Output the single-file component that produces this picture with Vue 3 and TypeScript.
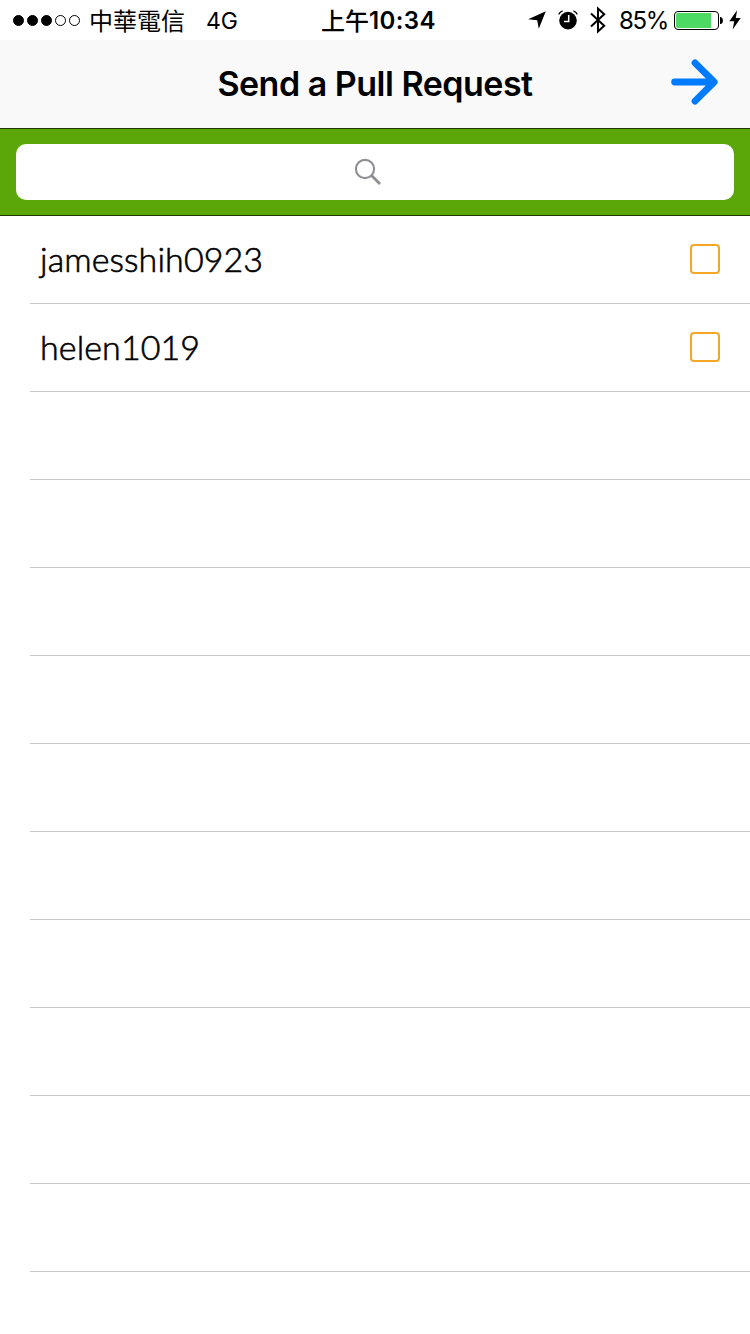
<script setup lang="ts">
import { reactive, ref } from 'vue'

interface Friend {
  name: string
  selected: boolean
}

const friends = reactive<Friend[]>([
  { name: 'jamesshih0923', selected: false },
  { name: 'helen1019', selected: false },
])
const emptyRows = 10
const query = ref('')
const signal: boolean[] = [true, true, true, false, false]
const battery = 85
</script>

<template>
  <div class="screen">
    <header class="status">
      <div class="left">
        <span class="dots">
          <i v-for="(on, i) in signal" :key="i" class="dot" :class="{ on }"></i>
        </span>
        <span class="carrier">中華電信</span>
        <span class="network">4G</span>
      </div>
      <div class="clock"><span class="ampm">上午</span><span class="time">10:34</span></div>
      <div class="right">
        <svg class="location" width="18" height="18" viewBox="0 0 18 18"><path d="M17.8 .3 10.8 17.8 9.2 9.2 .2 8.2Z" /></svg>
        <svg class="alarm" width="20" height="20" viewBox="0 0 20 20">
          <circle cx="10" cy="10.6" r="8.8" />
          <path d="M.7 4.4Q1.9 1.9 4.6 .9M19.3 4.4Q18.1 1.9 15.4 .9" fill="none" stroke="#000" stroke-width="1.3" />
          <path d="M10.7 5v6.4H6" fill="none" stroke="#fff" stroke-width="1.5" />
        </svg>
        <svg class="bluetooth" width="16" height="28" viewBox="0 0 16 28"><path d="M1 7.4 14.2 19.8 8 25.4V2.6L14.2 8.2 1 20.6" fill="none" stroke="#000" stroke-width="2" /></svg>
        <span class="percent">{{ battery }}%</span>
        <span class="battery"><span class="level" :style="{ width: battery + '%' }"></span></span>
        <svg class="cap" width="3" height="7" viewBox="0 0 3 7"><path d="M0 0H1Q3 1 3 3.5T1 7H0Z" /></svg>
        <svg class="bolt" width="12" height="20" viewBox="0 0 12 20"><path d="M8.1 .2 .3 11.2H5.2L3.7 19.6 11.7 8.1H6.8Z" /></svg>
      </div>
    </header>

    <nav class="navbar">
      <h1>Send a Pull Request</h1>
      <button class="send" aria-label="Send">
        <svg width="48" height="48" viewBox="0 0 48 48"><path d="M4.6 24H42M25 4.8 44.2 24 25 43.2" fill="none" stroke="#007aff" stroke-width="6.8" stroke-linecap="round" stroke-linejoin="round" /></svg>
      </button>
    </nav>

    <div class="search">
      <label class="field">
        <svg width="28" height="28" viewBox="0 0 28 28"><g fill="none" stroke="#8e8e93"><circle cx="11" cy="11" r="9.1" stroke-width="2.1" /><path d="M17.5 17.5 26 26" stroke-width="2.8" /></g></svg>
        <input v-model="query" type="text" aria-label="Search" />
      </label>
    </div>

    <ul class="list">
      <li v-for="friend in friends" :key="friend.name" @click="friend.selected = !friend.selected">
        <span class="name">{{ friend.name }}</span>
        <span class="box" :class="{ checked: friend.selected }"></span>
      </li>
      <li v-for="n in emptyRows" :key="n"></li>
    </ul>
  </div>
</template>

<style>
body { margin: 0; background: #fff; }
</style>

<style scoped>
.screen {
  width: 750px;
  height: 1334px;
  overflow: hidden;
  background: #fff;
  color: #000;
  font-family: Inter, "Liberation Sans", "Noto Sans CJK TC", sans-serif;
}
.screen * { box-sizing: border-box; }
.status {
  height: 40px;
  display: grid;
  grid-template-columns: 1fr 116px 1fr;
  grid-template-rows: 40px;
  align-items: center;
  padding: 0 9px 0 13px;
  font-size: 24px;
  line-height: 32px;
  white-space: nowrap;
}
.left, .right, .clock, .dots { display: flex; align-items: center; }
.left, .right, .clock { height: 40px; }
.dots { gap: 3px; }
.dot { width: 11px; height: 11px; border: 1px solid #000; border-radius: 50%; }
.dot.on { background: #000; }
.carrier { margin: -1px 0 0 9px; font-family: "Noto Sans CJK TC", sans-serif; font-weight: 400; }
.network { margin: 2px 0 0 21px; font-size: 23px; }
.clock { margin-left: 2px; }
.ampm { margin-top: -1px; font-family: "Noto Sans CJK TC", sans-serif; font-weight: 500; }
.time { margin-top: 2px; font-weight: 600; font-size: 24px; letter-spacing: 0.4px; }
.right { justify-content: flex-end; }
.alarm { margin-left: 12px; }
.bluetooth { margin-left: 12px; }
.percent { margin: 2px 0 0 13px; width: 49px; letter-spacing: -1.3px; }
.battery {
  width: 45px;
  height: 19px;
  margin-left: 6px;
  padding: 1px;
  border: 1px solid #000;
  border-radius: 4px;
}
.level { display: block; height: 15px; border-radius: 2px 0 0 2px; background: #4cd964; }
.cap { margin-left: 1px; }
.bolt { margin-left: 6px; }
.navbar {
  height: 88px;
  display: grid;
  grid-template-columns: 80px 1fr 80px;
  align-items: center;
  background: #f9f9f9;
}
h1 {
  grid-column: 2;
  margin: 0;
  text-align: center;
  font-size: 34px;
  line-height: 44px;
  font-weight: 600;
  letter-spacing: -0.5px;
}
.send { width: 48px; height: 48px; margin: 0 0 4px; padding: 0; border: 0; background: none; }
.send svg, .field svg { display: block; }
.search {
  height: 88px;
  padding: 15px 16px;
  background: #5ba70a;
  border-top: 1px solid #203a05;
  border-bottom: 1px solid #203a05;
}
.field {
  height: 56px;
  display: flex;
  align-items: center;
  justify-content: center;
  border-radius: 10px;
  background: #fff;
}
.field input { width: 14px; padding: 0; border: 0; outline: 0; background: none; font-size: 28px; }
.list { margin: 0; padding: 0 0 0 30px; list-style: none; }
.list li {
  height: 88px;
  display: flex;
  align-items: center;
  justify-content: space-between;
  padding: 0 30px 0 10px;
  border-bottom: 1px solid #c8c7cc;
}
.name {
  margin-bottom: 2px;
  font-family: Lato, "Liberation Sans", sans-serif;
  font-size: 34px;
  font-weight: 300;
  line-height: 44px;
  letter-spacing: 0.1px;
  -webkit-text-stroke: 0.6px #000;
}
.box { width: 30px; height: 30px; margin-bottom: 1px; border: 2px solid #f5a623; border-radius: 4px; }
.box.checked { background: #f5a623; }
</style>
